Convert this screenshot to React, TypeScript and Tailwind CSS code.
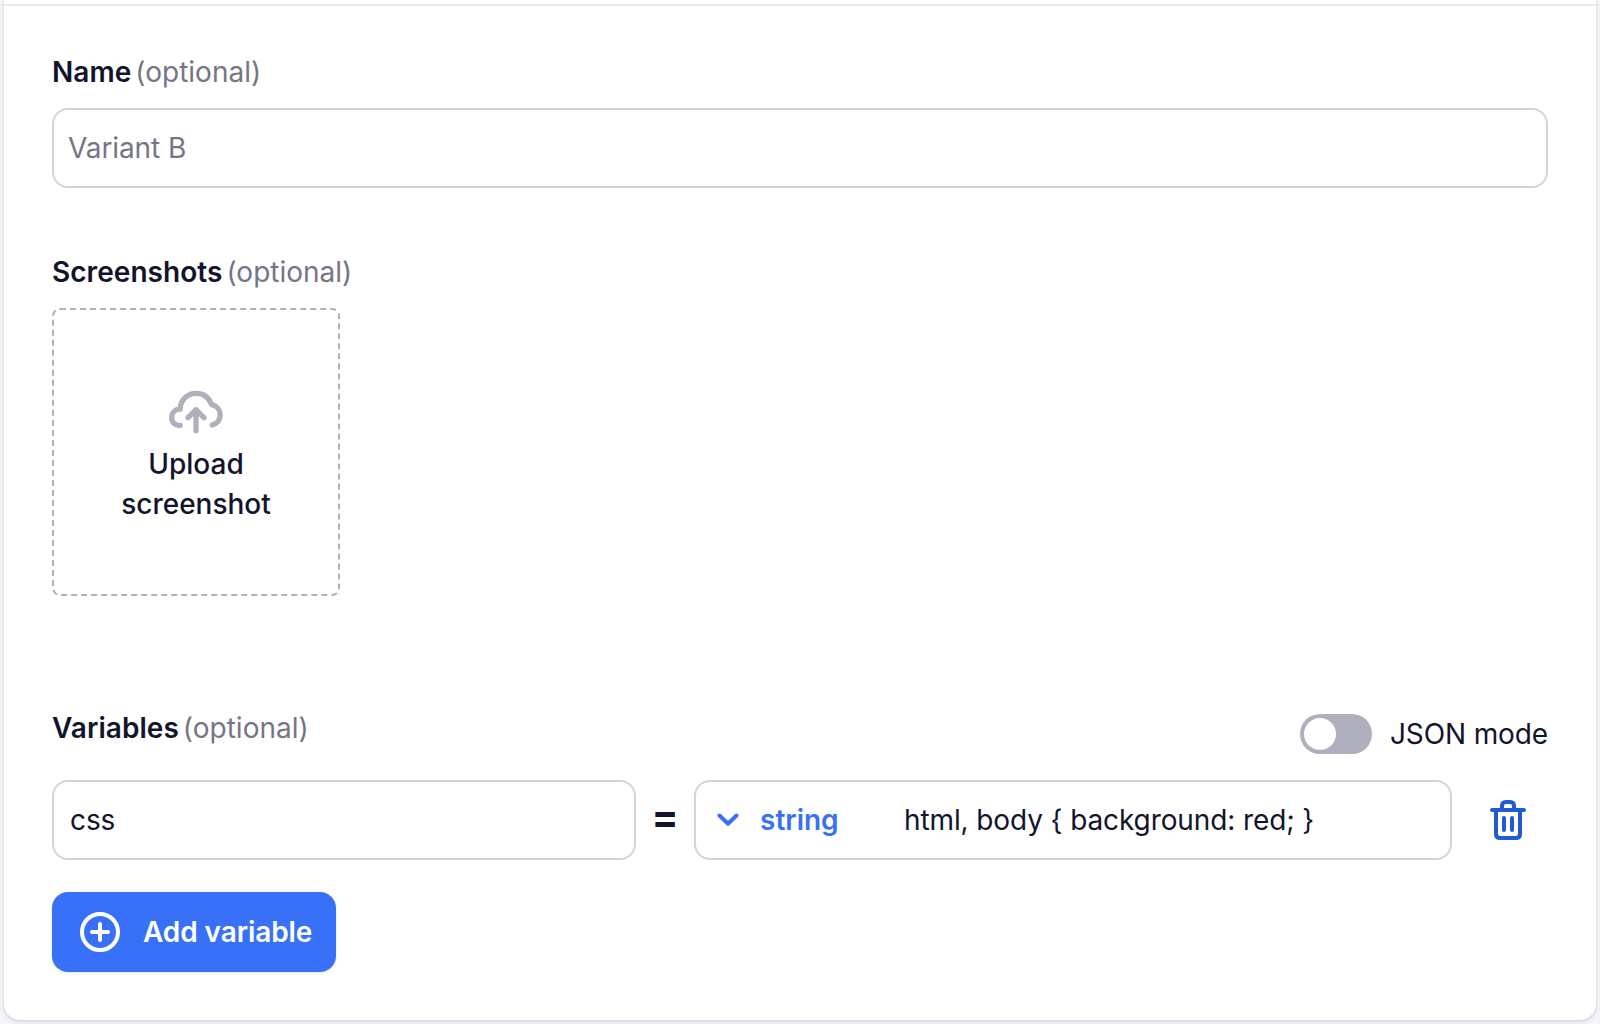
import type { ReactNode } from "react";

function FieldLabel({ children }: { children: ReactNode }) {
  return (
    <div className="flex h-10 items-center gap-1 whitespace-nowrap">
      <span className="font-semibold tracking-[0.05px]">{children}</span>
      <span className="text-[#757587]">(optional)</span>
    </div>
  );
}

function UploadCloudIcon() {
  return (
    <svg width="56" height="44" viewBox="0 0 56 44" fill="none" stroke="#b0afbd" strokeWidth="5.3" strokeLinecap="round" strokeLinejoin="round">
      <path d="M12.2 35.5C7 35.9 3.7 32 3.7 27.8C3.7 23 7 19.2 12.2 19.2C12.2 10 19.5 3.3 28 3.3C35.5 3.3 41 7.7 43.7 14.6C48.5 15.6 52.2 19.7 52.2 24.8C52.2 29.7 49.3 33.5 44.2 35" />
      <path d="M28 40.7V20M20 27.7L28 19.7L36 27.7" />
    </svg>
  );
}

function TrashIcon() {
  return (
    <svg width="36" height="40" viewBox="0 0 36 40" fill="none" stroke="#2159d6" strokeWidth="4" strokeLinecap="round" strokeLinejoin="round">
      <path d="M2 10H34M6 10V34Q6 38 10 38H26Q30 38 30 34V10M12 10V6Q12 2 16 2H20Q24 2 24 6V10M14 18V30M22 18V30" />
    </svg>
  );
}

function PlusCircleIcon() {
  return (
    <svg width="40" height="40" viewBox="0 0 40 40" fill="none" stroke="white" strokeWidth="4" strokeLinecap="round">
      <circle cx="20" cy="20" r="18" />
      <path d="M20 12V28M12 20H28" />
    </svg>
  );
}

function ChevronIcon() {
  return (
    <svg width="22" height="14" viewBox="0 0 22 14" fill="none" stroke="#3871f7" strokeWidth="4" strokeLinecap="round" strokeLinejoin="round">
      <path d="M2.5 2.5L11 10.7L19.5 2.5" />
    </svg>
  );
}

export default function App() {
  return (
    <div className="h-[1024px] w-[1600px] overflow-hidden bg-[#f5f5f8] px-1 font-['Inter',sans-serif] text-[28px] leading-10 text-[#12142b]">
      <main className="flex h-[1020px] flex-col items-start rounded-b-2xl bg-white px-12 pt-1 shadow-[0_2px_4px_rgba(45,35,100,0.15),0_0_2px_rgba(45,35,100,0.12)]">
        <div className="-mx-12 h-[2px] w-[1592px] shrink-0 bg-[#e9e9ef]" />
        <section className="mt-[46px] w-full">
          <FieldLabel>Name</FieldLabel>
          <input
            className="mt-4 block h-20 w-full rounded-2xl border-2 border-[#d3d3dc] bg-white px-[14px] tracking-[-0.1px] outline-none placeholder:text-[#757587]"
            placeholder="Variant B"
          />
        </section>

        <section className="mt-16">
          <FieldLabel>Screenshots</FieldLabel>
          <button className="mt-4 flex h-72 w-72 flex-col items-center rounded-lg border-2 border-dashed border-[#b0afbd] pt-20 font-medium">
            <UploadCloudIcon />
            <span className="mt-[10px] w-40">Upload screenshot</span>
          </button>
        </section>

        <section className="mt-28 w-full">
          <div className="flex items-start justify-between">
            <FieldLabel>Variables</FieldLabel>
            <label className="mt-[6px] flex items-center gap-[18px]">
              <span className="flex h-10 w-[72px] items-center rounded-full bg-[#b0afbd] p-1">
                <span className="h-8 w-8 rounded-full bg-white" />
              </span>
              <span className="tracking-[-0.12px] whitespace-nowrap">JSON mode</span>
            </label>
          </div>

          <div className="mt-[26px] flex items-center">
            <input
              className="h-20 w-[584px] rounded-2xl border-2 border-[#d3d3dc] bg-white px-4 tracking-[-0.1px] outline-none"
              defaultValue="css"
            />
            <span className="w-[58px] pb-[6px] text-center text-[40px] leading-10 font-bold">=</span>
            <div className="flex h-20 w-[758px] items-center rounded-2xl border-2 border-[#d3d3dc] pl-[21px]">
              <ChevronIcon />
              <span className="ml-[21px] w-36 font-semibold text-[#3871f7]">string</span>
              <span className="tracking-[-0.11px] whitespace-pre">{"html, body { background: red; }"}</span>
            </div>
            <button className="ml-[38px]">
              <TrashIcon />
            </button>
          </div>

          <button className="mt-8 flex h-20 w-[284px] items-center gap-[23px] rounded-2xl bg-[#3871f7] pl-7 font-semibold tracking-[-0.09px] whitespace-nowrap text-white shadow-[0_1px_3px_rgba(18,20,43,0.1)]">
            <PlusCircleIcon />
            Add variable
          </button>
        </section>
      </main>
    </div>
  );
}
